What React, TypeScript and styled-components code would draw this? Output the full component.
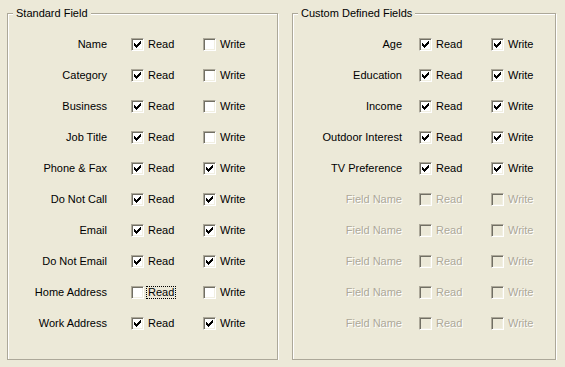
import React from 'react';
import styled, { createGlobalStyle } from 'styled-components';

const GlobalStyle = createGlobalStyle`
  html, body {
    margin: 0;
    padding: 0;
    background: #ece9d8;
    overflow: hidden;
  }
  body {
    font-family: "Liberation Sans", Arial, sans-serif;
    font-size: 11px;
    line-height: 13px;
    color: #000;
  }
`;

interface IField {
  label: string;
  read: boolean;
  write: boolean;
  disabled?: boolean;
  focusRead?: boolean;
}

const standardFields: IField[] = [
  { label: 'Name', read: true, write: false },
  { label: 'Category', read: true, write: false },
  { label: 'Business', read: true, write: false },
  { label: 'Job Title', read: true, write: false },
  { label: 'Phone & Fax', read: true, write: true },
  { label: 'Do Not Call', read: true, write: true },
  { label: 'Email', read: true, write: true },
  { label: 'Do Not Email', read: true, write: true },
  { label: 'Home Address', read: false, write: false, focusRead: true },
  { label: 'Work Address', read: true, write: true },
];

const customFields: IField[] = [
  { label: 'Age', read: true, write: true },
  { label: 'Education', read: true, write: true },
  { label: 'Income', read: true, write: true },
  { label: 'Outdoor Interest', read: true, write: true },
  { label: 'TV Preference', read: true, write: true },
  ...Array.from({ length: 5 }, () => ({
    label: 'Field Name',
    read: false,
    write: false,
    disabled: true,
  })),
];

const Style = {
  Page: styled.div`
    display: flex;
    align-items: flex-start;
    gap: 14px;
    padding: 7px 0 0 7px;
  `,
  Group: styled.fieldset<{ $width: number }>`
    box-sizing: border-box;
    width: ${({ $width }) => $width}px;
    margin: 0;
    padding: 9px 0 20px 0;
    border: 1px solid #aca899;
    box-shadow: inset 1px 1px 0 #fff, 1px 1px 0 #fff;
    min-width: 0;
  `,
  Legend: styled.legend`
    margin-left: 5px;
    padding: 0 3px;
    line-height: 13px;
    background: #ece9d8;
  `,
  Grid: styled.div<{ $readX: number }>`
    display: grid;
    grid-template-columns: ${({ $readX }) => $readX}px 72px auto;
    grid-auto-rows: 31px;
    align-items: center;
  `,
  Label: styled.span<{ $gap: number; $disabled?: boolean }>`
    display: block;
    height: 13px;
    line-height: 13px;
    text-align: right;
    padding-right: ${({ $gap }) => $gap}px;
    white-space: nowrap;
    color: ${({ $disabled }) => ($disabled ? '#aca899' : '#000')};
    text-shadow: ${({ $disabled }) => ($disabled ? '1px 1px 0 #fff' : 'none')};
  `,
  Option: styled.label<{ $disabled?: boolean }>`
    display: flex;
    align-items: center;
    gap: 4px;
    height: 13px;
    color: ${({ $disabled }) => ($disabled ? '#aca899' : '#000')};
    text-shadow: ${({ $disabled }) => ($disabled ? '1px 1px 0 #fff' : 'none')};
  `,
  Box: styled.span<{ $disabled?: boolean }>`
    box-sizing: border-box;
    display: flex;
    align-items: center;
    justify-content: center;
    width: 13px;
    height: 13px;
    flex: none;
    border-top: 1px solid #aca899;
    border-left: 1px solid #aca899;
    border-bottom: 1px solid #fff;
    border-right: 1px solid #fff;
    box-shadow: inset 1px 1px 0 #716f64, inset -1px -1px 0 #f1efe2;
    background: ${({ $disabled }) => ($disabled ? '#ece9d8' : '#fff')};
  `,
  Caption: styled.span<{ $focus?: boolean }>`
    line-height: 11px;
    padding: 0 1px;
    margin-left: -1px;
    outline: ${({ $focus }) => ($focus ? '1px dotted #000' : 'none')};
  `,
};

// classic 7x7 tick, one rect per pixel row
const tickRows: [number, number, number][] = [
  [0, 6, 1],
  [1, 5, 2],
  [2, 0, 1],
  [2, 4, 3],
  [3, 0, 2],
  [3, 3, 3],
  [4, 0, 5],
  [5, 1, 3],
  [6, 2, 1],
];

const Tick = () => (
  <svg width="7" height="7" viewBox="0 0 7 7" shapeRendering="crispEdges">
    {tickRows.map(([y, x, w], i) => (
      <rect key={i} x={x} y={y} width={w} height={1} fill="#000" />
    ))}
  </svg>
);

const CheckOption = ({
  text,
  checked,
  disabled,
  focus,
}: {
  text: string;
  checked: boolean;
  disabled?: boolean;
  focus?: boolean;
}) => (
  <Style.Option $disabled={disabled}>
    <Style.Box $disabled={disabled}>{checked && <Tick />}</Style.Box>
    <Style.Caption $focus={focus}>{text}</Style.Caption>
  </Style.Option>
);

const FieldGroup = ({
  title,
  width,
  readX,
  gap,
  fields,
}: {
  title: string;
  width: number;
  readX: number;
  gap: number;
  fields: IField[];
}) => (
  <Style.Group $width={width}>
    <Style.Legend>{title}</Style.Legend>
    <Style.Grid $readX={readX}>
      {fields.map((f, i) => (
        <React.Fragment key={i}>
          <Style.Label $gap={gap} $disabled={f.disabled}>
            {f.label}
          </Style.Label>
          <CheckOption
            text="Read"
            checked={f.read}
            disabled={f.disabled}
            focus={f.focusRead}
          />
          <CheckOption text="Write" checked={f.write} disabled={f.disabled} />
        </React.Fragment>
      ))}
    </Style.Grid>
  </Style.Group>
);

const App = () => {
  return (
    <>
      <GlobalStyle />
      <Style.Page>
        <FieldGroup
          title="Standard Field"
          width={271}
          readX={123}
          gap={24}
          fields={standardFields}
        />
        <FieldGroup
          title="Custom Defined Fields"
          width={264}
          readX={126}
          gap={17}
          fields={customFields}
        />
      </Style.Page>
    </>
  );
};

export default App;
